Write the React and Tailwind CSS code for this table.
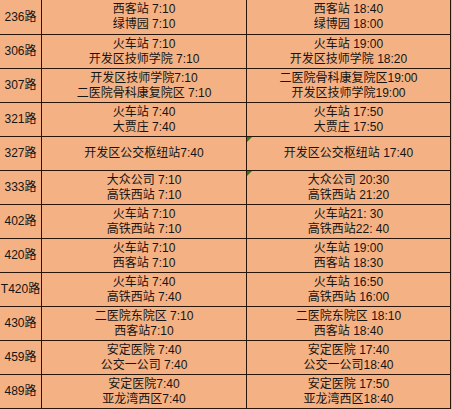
const routes = [
  ['236路', ['西客站 7:10', '绿博园 7:10'], ['西客站 18:40', '绿博园 18:00']],
  ['306路', ['火车站 7:10', '开发区技师学院 7:10'], ['火车站 19:00', '开发区技师学院 18:20']],
  ['307路', ['开发区技师学院7:10', '二医院骨科康复院区 7:10'], ['二医院骨科康复院区19:00', '开发区技师学院19:00']],
  ['321路', ['火车站 7:40', '大贾庄 7:40'], ['火车站 17:50', '大贾庄 17:50']],
  ['327路', ['开发区公交枢纽站7:40'], ['开发区公交枢纽站 17:40'], true],
  ['333路', ['大众公司 7:10', '高铁西站 7:10'], ['大众公司 20:30', '高铁西站 21:20'], true],
  ['402路', ['火车站 7:10', '高铁西站 7:10'], ['火车站21: 30', '高铁西站22: 40']],
  ['420路', ['火车站 7:10', '西客站 7:10'], ['火车站 19:00', '西客站 18:30']],
  ['T420路', ['火车站 7:40', '高铁西站 7:40'], ['火车站 16:50', '高铁西站 16:00']],
  ['430路', ['二医院东院区 7:10', '西客站7:10'], ['二医院东院区 18:10', '西客站 18:40']],
  ['459路', ['安定医院 7:40', '公交一公司 7:40'], ['安定医院 17:40', '公交一公司18:40']],
  ['489路', ['安定医院7:40', '亚龙湾西区7:40'], ['安定医院 17:50', '亚龙湾西区18:40']],
];

function Lines({ lines }) {
  return (
    <div className="flex flex-col items-center">
      {lines.map((l, i) => (
        <span key={i} className="whitespace-pre">{l}</span>
      ))}
    </div>
  );
}

export default function App() {
  return (
    <div
      className="w-[452px] h-[409px] bg-[#f4b183] text-[#151515] text-[12px] leading-[15px] overflow-hidden"
      style={{ fontFamily: '"Liberation Sans", "Noto Sans CJK SC", sans-serif' }}
    >
      {routes.map(([name, am, pm, mark], i) => (
        <div
          key={name}
          className={`flex w-[451px] border-b border-[#2a1608] ${i === 0 ? 'h-[35px]' : 'h-[34px]'}`}
        >
          <div className="w-[42px] shrink-0 border-r border-[#2a1608] flex items-center justify-center">
            {name}
          </div>
          <div className="w-[205px] shrink-0 border-r border-[#2a1608] flex items-center justify-center">
            <Lines lines={am} />
          </div>
          <div className="relative w-[204px] shrink-0 border-r border-[#2a1608] flex items-center justify-center">
            {mark && (
              <span className="absolute left-0 top-0 w-0 h-0 border-t-[5px] border-t-[#2e7d12] border-r-[5px] border-r-transparent" />
            )}
            <Lines lines={pm} />
          </div>
        </div>
      ))}
    </div>
  );
}
